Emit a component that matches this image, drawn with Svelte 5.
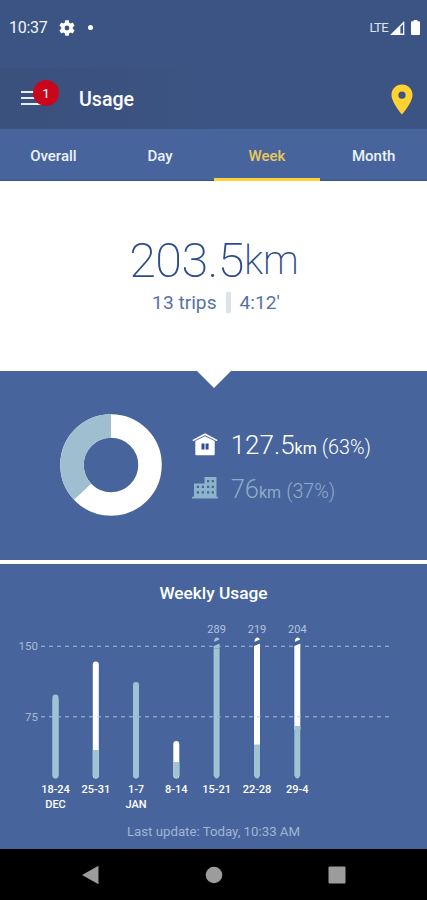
<script>
  const tabs = ['Overall', 'Day', 'Week', 'Month'];
  const active = 'Week';
  const base = 215.5;
  // heights in px above the chart base: top = whole bar, city = lower segment
  const bars = [
    { x: 55.5, range: '18-24', month: 'DEC', top: 84, city: 84 },
    { x: 95.8, range: '25-31', top: 117, city: 28.5 },
    { x: 136, range: '1-7', month: 'JAN', top: 96.5, city: 96.5 },
    { x: 176.3, range: '8-14', top: 37.5, city: 16.5 },
    { x: 216.6, range: '15-21', top: 134, city: 134, over: 289 },
    { x: 257, range: '22-28', top: 134, city: 34, over: 219 },
    { x: 297.3, range: '29-4', top: 134, city: 52.5, over: 204 }
  ];
  const lines = [{ label: '150', y: 83.2 }, { label: '75', y: 153.8 }];
</script>

<div class="screen">
  <header>
    <div class="status">
      <span class="time">10:37</span>
      <svg class="gear" width="16" height="16" viewBox="2 2 20 20"><path fill="#fff" d="M19.14 12.94c.04-.3.06-.61.06-.94s-.02-.64-.07-.94l2.03-1.58c.18-.14.23-.41.12-.61l-1.92-3.32c-.12-.22-.37-.29-.59-.22l-2.39.96c-.5-.38-1.03-.7-1.62-.94l-.36-2.54c-.04-.24-.24-.41-.48-.41h-3.84c-.24 0-.43.17-.47.41l-.36 2.54c-.59.24-1.13.57-1.62.94l-2.39-.96c-.22-.08-.47 0-.59.22L2.74 8.87c-.12.21-.08.47.12.61l2.03 1.58c-.05.3-.09.63-.09.94s.02.64.07.94l-2.03 1.58c-.18.14-.23.41-.12.61l1.92 3.32c.12.22.37.29.59.22l2.39-.96c.5.38 1.03.7 1.62.94l.36 2.54c.05.24.24.41.48.41h3.84c.24 0 .44-.17.47-.41l.36-2.54c.59-.24 1.13-.56 1.62-.94l2.39.96c.22.08.47 0 .59-.22l1.92-3.32c.12-.22.07-.47-.12-.61l-2.01-1.58zM12 15a3 3 0 1 1 0-6 3 3 0 0 1 0 6z"/></svg>
      <span class="dot"></span>
      <span class="lte">LTE</span>
      <svg class="signal" width="15" height="14" viewBox="0 0 15 14"><path fill="#fff" fill-rule="evenodd" d="M14.3 0V14H0ZM13 3.2 10.4 5.8V12.6H13Z"/></svg>
      <svg class="battery" width="9" height="15" viewBox="0 0 9 15"><path fill="#fff" d="M2.7 0h3.6v1.3H8q1 0 1 1V14q0 1-1 1H1q-1 0-1-1V2.300q0-1 1-1h1.700z"/></svg>
    </div>
    <div class="appbar">
      <div class="menu">
        <svg width="20" height="16" viewBox="0 0 20 16"><path stroke="#e9edf5" stroke-width="2" d="M0 1H20M0 7H20M0 13H20"/></svg>
        <span class="badge">1</span>
      </div>
      <h1>Usage</h1>
      <svg class="pin" width="22" height="31" viewBox="0 0 22 31"><path fill="#fdd231" fill-rule="evenodd" d="M11 .5C5.100.5.500 5.100.500 11 .5 18.600 11 30.500 11 30.500S21.500 18.600 21.500 11C21.500 5.100 16.900.5 11 .5ZM11 7.600a3.600 3.600 0 1 1 0 7.200 3.600 3.600 0 0 1 0-7.200Z"/></svg>
    </div>
  </header>

  <nav class="tabs">
    {#each tabs as tab}
      <div class="tab" class:active={tab === active}>{tab}</div>
    {/each}
  </nav>

  <section class="hero">
    <div class="total"><span class="num">203.5</span><span class="unit">km</span></div>
    <div class="trips"><span>13 trips</span><i></i><span>4:12'</span></div>
  </section>

  <section class="split">
    <svg class="notch" width="34" height="17" viewBox="0 0 34 17"><path fill="#fff" d="M0 0H34L17 17Z"/></svg>
    <svg class="donut" width="102" height="102" viewBox="-51 -51 102 102">
      <circle r="39" fill="none" stroke="#fff" stroke-width="23.500"/>
      <circle r="39" fill="none" stroke="#9fbfd1" stroke-width="23.500" pathLength="100" stroke-dasharray="37 63" transform="rotate(136.800)"/>
    </svg>
    <div class="legend">
      <div class="row home">
        <svg width="26" height="23" viewBox="0 0 26 23"><path fill="none" stroke="#fff" stroke-width="1.600" d="M.8 7.600 13 1.200 25.200 7.600"/><path fill="#fff" d="M3.300 8 13 3.200 22.700 8V21.200Q22.700 22.200 21.700 22.200H4.300Q3.300 22.200 3.300 21.200Z"/><path fill="#2f4f97" d="M9.500 10.500H12.500V16.500H9.500ZM13.600 10.500H16.600V16.500H13.600Z"/></svg>
        <span class="big">127.5</span><span class="km">km</span><span class="pct">(63%)</span>
      </div>
      <div class="row city">
        <svg width="26" height="22" viewBox="0 0 26 22"><path fill="#8cb4cb" fill-rule="evenodd" d="M12.500 0H24.500V19.800H26V21.500H0V19.800H2V6.500H12.500ZM15 3V5.200H17.200V3ZM19.700 3V5.200H21.900V3ZM15 8.700V10.900H17.200V8.700ZM19.700 8.700V10.900H21.900V8.700ZM15 14.200V16.400H17.200V14.200ZM19.700 14.200V16.400H21.900V14.200ZM4.800 8.700V10.900H7V8.700ZM9.800 8.700V10.900H12V8.700ZM4.800 14.200V16.400H7V14.200ZM9.800 14.200V16.400H12V14.200Z"/></svg>
        <span class="big">76</span><span class="km">km</span><span class="pct">(37%)</span>
      </div>
    </div>
  </section>

  <section class="weekly">
    <h2>Weekly Usage</h2>
    <svg class="chart" width="427" height="250" viewBox="0 0 427 250">
      {#each lines as l}
        <line x1="41" x2="390.500" y1={l.y} y2={l.y} stroke="#a9bcda" stroke-width="1.100" stroke-dasharray="4 4"/>
        <text class="axis" x="38" y={l.y + 3.800}>{l.label}</text>
      {/each}
      {#each bars as b}
        <g transform="translate({b.x} 0)">
          {#if b.over}
            <path fill="#3c60a0" d="M-4.300 {base} V79H4.300V{base}Z" opacity=".45"/>
            <path fill={b.city === b.top ? '#9fc3d3' : '#fff'} d="M-3 83 3 80.500V{base - b.city + 4}H-3Z"/>
            <path fill={b.city === b.top ? '#9fc3d3' : '#fff'} d="M-2.600 79Q-2.300 74.500.500 74.500 2.800 74.800 2.800 76.500Z"/>
            <text class="over" y="70">{b.over}</text>
          {:else}
            <rect x="-3" y={base - b.top} width="6" height={b.top} rx="3" fill={b.city === b.top ? '#9fc3d3' : '#fff'}/>
          {/if}
          <path fill="#9fc3d3" d="M-3 {base - b.city + (b.city === b.top ? 4 : 0)}H3V{base - 3}Q2 {base} 0 {base}T-3 {base - 3}Z"/>
          <text class="range" y="229.500">{b.range}</text>
          {#if b.month}<text class="range" y="244.500">{b.month}</text>{/if}
        </g>
      {/each}
      <line x1="41" x2="390.500" y1="153.800" y2="153.800" stroke="#8fa6cc" stroke-opacity=".5" stroke-dasharray="4 4"/>
    </svg>
    <p>Last update: Today, 10:33 AM</p>
  </section>

  <footer>
    <svg width="18" height="20" viewBox="0 0 18 20"><path fill="#9c9c9c" d="M0 10 16.500.8V19.200Z"/></svg>
    <svg width="18" height="18" viewBox="0 0 18 18"><circle cx="9" cy="9" r="8.300" fill="#9c9c9c"/></svg>
    <svg width="18" height="18" viewBox="0 0 18 18"><rect x=".5" y=".5" width="17" height="17" rx="1" fill="#9c9c9c"/></svg>
  </footer>
</div>

<style>
  .screen { width: 427px; height: 900px; overflow: hidden; display: flex; flex-direction: column; background: #47659c; color: #fff; font-family: Roboto, "Liberation Sans", sans-serif; }
  svg { display: block; flex: none; }
  h1, h2, p { margin: 0; }
  header { height: 129px; background: #3c5483; }
  .status { height: 68px; box-sizing: border-box; padding: 0 7px 13px 9px; display: flex; align-items: center; }
  .time { width: 50px; font-size: 16px; letter-spacing: -.3px; color: #f1f4fa; }
  .dot { width: 5px; height: 5px; margin-left: 13px; border-radius: 50%; background: #fff; }
  .lte { margin-left: auto; font-size: 13px; letter-spacing: -.6px; color: #dfe6f2; }
  .signal { margin-left: 2px; }
  .battery { margin-left: 6px; }
  .appbar { height: 61px; display: flex; align-items: center; padding: 0 14.500px 0 20.500px; background: linear-gradient(90deg, #3a507d, #3c5483 50%); }
  .menu { position: relative; width: 58.500px; }
  .badge { position: absolute; left: 12.500px; top: -10.500px; width: 26px; height: 26px; border-radius: 50%; background: #ca061c; font-size: 13.500px; line-height: 27px; text-align: center; }
  h1 { font-size: 19.600px; font-weight: 500; line-height: 24px; padding-top: 2px; }
  .pin { margin: 2px 0 0 auto; }
  .tabs { height: 52px; display: flex; }
  .tab { flex: 1; box-sizing: border-box; font-size: 15px; font-weight: 500; line-height: 54px; text-align: center; border-bottom: 1px solid #33558f; color: #edf2fa; }
  .tab.active { color: #ebc95a; border-bottom: 3px solid #fbd23c; }
  .hero { height: 190px; box-sizing: border-box; padding-top: 51px; background: #fff; color: #2a4b8d; }
  .total { display: flex; justify-content: center; height: 58px; line-height: 58px; padding-left: 1px; font-weight: 200; }
  .num { font-size: 48.500px; letter-spacing: -.6px; }
  .unit { font-size: 40px; }
  .trips { display: flex; justify-content: center; align-items: center; height: 25px; padding-left: 5px; font-size: 19.200px; color: #5871a5; }
  .trips i { width: 5px; height: 21px; margin: 0 9px; background: #dde2ed; }
  .split { position: relative; height: 189px; display: flex; align-items: flex-start; }
  .notch { position: absolute; left: 197px; top: 0; }
  .donut { margin: 42.500px 0 0 59.700px; }
  .legend { margin: 51px 0 0 30px; }
  .row { display: flex; align-items: baseline; height: 44px; line-height: 47px; font-weight: 300; }
  .row svg { align-self: center; width: 26px; margin-right: 13px; }
  .big { font-size: 26px; }
  .km { font-size: 16px; font-weight: 400; }
  .pct { font-size: 19.700px; margin-left: 5px; }
  .city { color: #8cacc7; }
  .city .big { font-size: 25.500px; }
  .weekly { height: 289px; box-sizing: border-box; border-top: 4px solid #fff; display: flex; flex-direction: column; }
  h2 { height: 0; font-size: 17.300px; font-weight: 500; line-height: 59px; text-align: center; }
  .chart { margin-top: -1px; }
  text { text-anchor: middle; font-size: 11px; }
  .range { fill: #fff; font-weight: 500; }
  .over { fill: #b3c3df; }
  .axis { fill: #a9bad8; text-anchor: end; font-size: 11.500px; }
  p { margin-top: 9px; line-height: 20px; font-size: 13.250px; text-align: center; color: #a3b4d4; }
  footer { height: 51px; background: #000; display: flex; justify-content: center; align-items: center; gap: 105px; }
</style>
